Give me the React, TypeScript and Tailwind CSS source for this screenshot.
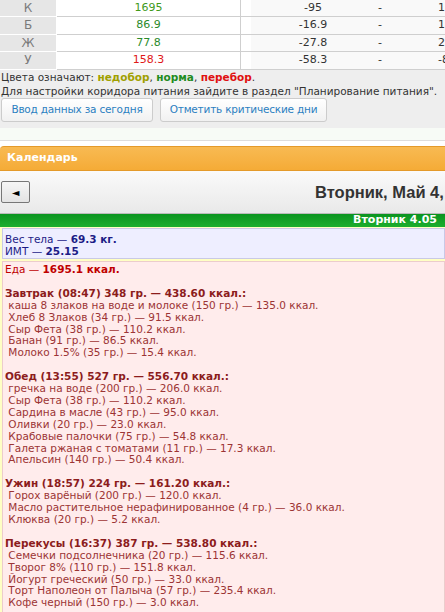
import React from "react";

const rows = [
  { label: "К", value: "1695", color: "text-[#3f9a1c]", diff: "-95", last: "100" },
  { label: "Б", value: "86.9", color: "text-[#2b8a2b]", diff: "-16.9", last: "130" },
  { label: "Ж", value: "77.8", color: "text-[#2b8a2b]", diff: "-27.8", last: "2.2" },
  { label: "У", value: "158.3", color: "text-[#e01818]", diff: "-58.3", last: "-83" },
];

const meals = [
  {
    title: "Завтрак (08:47) 348 гр. — 438.60 ккал.:",
    items: [
      "каша 8 злаков на воде и молоке (150 гр.) — 135.0 ккал.",
      "Хлеб 8 Злаков (34 гр.) — 91.5 ккал.",
      "Сыр Фета (38 гр.) — 110.2 ккал.",
      "Банан (91 гр.) — 86.5 ккал.",
      "Молоко 1.5% (35 гр.) — 15.4 ккал.",
    ],
  },
  {
    title: "Обед (13:55) 527 гр. — 556.70 ккал.:",
    items: [
      "гречка на воде (200 гр.) — 206.0 ккал.",
      "Сыр Фета (38 гр.) — 110.2 ккал.",
      "Сардина в масле (43 гр.) — 95.0 ккал.",
      "Оливки (20 гр.) — 23.0 ккал.",
      "Крабовые палочки (75 гр.) — 54.8 ккал.",
      "Галета ржаная с томатами (11 гр.) — 17.3 ккал.",
      "Апельсин (140 гр.) — 50.4 ккал.",
    ],
  },
  {
    title: "Ужин (18:57) 224 гр. — 161.20 ккал.:",
    items: [
      "Горох варёный (200 гр.) — 120.0 ккал.",
      "Масло растительное нерафинированное (4 гр.) — 36.0 ккал.",
      "Клюква (20 гр.) — 5.2 ккал.",
    ],
  },
  {
    title: "Перекусы (16:37) 387 гр. — 538.80 ккал.:",
    items: [
      "Семечки подсолнечника (20 гр.) — 115.6 ккал.",
      "Творог 8% (110 гр.) — 151.8 ккал.",
      "Йогурт греческий (50 гр.) — 33.0 ккал.",
      "Торт Наполеон от Палыча (57 гр.) — 235.4 ккал.",
      "Кофе черный (150 гр.) — 3.0 ккал.",
    ],
  },
];

function NormTable() {
  return (
    <div className="-mt-[0.5px] w-[560px] text-[11px]">
      {rows.map((r) => (
        <div key={r.label} className="flex h-[17.5px] leading-[16.5px]">
          <div className="w-[56px] shrink-0 border-b border-white bg-[#e6e6e6] text-center text-[12px] text-[#7a7a7a]">
            {r.label}
          </div>
          <div className="w-px shrink-0 bg-white" />
          <div className={`w-[183px] shrink-0 border-b border-[#cfcfcf] bg-white text-center ${r.color}`}>
            {r.value}
          </div>
          <div className="w-px shrink-0 bg-[#cfcfcf]" />
          <div className="w-[134px] shrink-0 border-b border-[#cfcfcf] bg-white pl-[10px]">
            <div className="h-full bg-[#f9f9f9] text-center text-[#333]">{r.diff}</div>
          </div>
          <div className="w-[10px] shrink-0 border-b border-[#cfcfcf] bg-[#f9f9f9] text-center text-[#333]">
            -
          </div>
          <div className="w-[150px] shrink-0 border-b border-[#cfcfcf] bg-[#f9f9f9] pl-[53px] text-[#333]">
            {r.last}
          </div>
        </div>
      ))}
    </div>
  );
}

function TopPanel() {
  return (
    <div className="bg-[#eeeeee] pb-[6px]">
      <NormTable />
      <div className="mt-[0.5px] whitespace-nowrap pl-px text-[10.5px] leading-[14px] text-[#333]">
        <div>
          Цвета означают: <b className="text-[#a0a000]">недобор</b>,{" "}
          <b className="text-[#1e8c1e]">норма</b>,{" "}
          <b className="text-[#e01010]">перебор</b>.
        </div>
        <div>
          Для настройки коридора питания зайдите в раздел "Планирование питания".
        </div>
      </div>
      <div className="flex gap-[7px] pl-px">
        <button className="h-[24px] w-[152px] rounded-[3px] border border-[#cccccc] bg-gradient-to-b from-white to-[#f1f1f1] text-[10.5px] tracking-[-0.2px] text-[#2b7fc1]">
          Ввод данных за сегодня
        </button>
        <button className="h-[24px] w-[167px] rounded-[3px] border border-[#cccccc] bg-gradient-to-b from-white to-[#f1f1f1] text-[10.5px] tracking-[-0.2px] text-[#2b7fc1]">
          Отметить критические дни
        </button>
      </div>
    </div>
  );
}

function DayCell() {
  return (
    <div className="bg-[#ffffc4] pl-[2px] pb-[2px]">
      <div className="-ml-[2px] flex h-[13px] items-center justify-end bg-gradient-to-b from-[#0b9420] to-[#1cae2e] pr-[8px] text-[11px] font-bold text-white">
        Вторник 4.05
      </div>
      <div className="mt-px border border-[#c9c9e6] bg-[#eeeeff] px-[2px] pt-[5px] pb-px text-[10.5px] leading-[11.5px] text-[#1c1c86]">
        <div>
          Вес тела — <b>69.3 кг.</b>
        </div>
        <div>
          ИМТ — <b>25.15</b>
        </div>
      </div>
      <div className="mt-[2px] h-[400px] border border-[#eccccc] bg-[#ffecec] px-[2px] text-[10.5px] leading-[11.9px]">
        <div className="mt-[2px] text-[#c00000]">
          Еда — <b>1695.1 ккал.</b>
        </div>
        {meals.map((m) => (
          <div key={m.title} className="mt-[11.9px]">
            <div className="font-bold text-[#8c1c1c]">{m.title}</div>
            {m.items.map((it, i) => (
              <div key={i} className="whitespace-pre text-[#9c3434]">
                {" " + it}
              </div>
            ))}
          </div>
        ))}
      </div>
    </div>
  );
}

export default function App() {
  return (
    <div className="h-[612px] w-[445px] overflow-hidden bg-white font-['DejaVu_Sans',sans-serif]">
      <TopPanel />
      <div className="h-[13px] border-b border-[#dddddd] bg-[#f7fbf6]" />
      <div className="h-[5px]" />
      <div className="flex h-[25px] items-center rounded-tl-[4px] border-y border-[#e49a2a] bg-gradient-to-b from-[#f8ba52] to-[#f5ab36] pl-[7px] text-[11px] font-bold text-white">
        Календарь
      </div>
      <div className="flex h-[43px] items-center border-b border-[#bbbbbb] bg-gradient-to-b from-[#fafafa] to-[#e9e9e9]">
        <div className="ml-px flex h-[22px] w-[29px] shrink-0 items-center justify-center rounded-[2px] border border-[#777777] bg-gradient-to-b from-[#f6f6f6] to-[#e4e4e4] text-[10px] text-black">
          ◄
        </div>
        <div className="ml-[285px] shrink-0 whitespace-nowrap font-['Liberation_Sans',sans-serif] text-[16.5px] font-bold text-[#333]">
          Вторник, Май 4, 2021
        </div>
      </div>
      <DayCell />
    </div>
  );
}
